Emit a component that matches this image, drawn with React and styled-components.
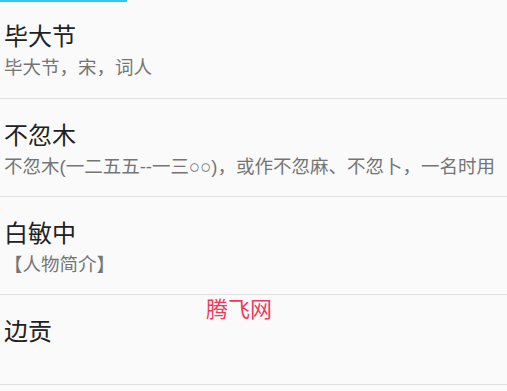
import React from "react";
import styled, { createGlobalStyle } from "styled-components";

const Global = createGlobalStyle`
  html, body { margin: 0; padding: 0; background: #fafafa; }
  body { font-family: Roboto, "Noto Sans CJK SC", sans-serif; }
`;

const Page = styled.div`
  position: relative;
  width: 507px;
  height: 391px;
  background: #fafafa;
  overflow: hidden;
`;

const TopBar = styled.div`
  position: absolute;
  left: 0;
  top: 0;
  width: 127px;
  height: 2px;
  background: #35c6ef;
`;

const List = styled.div`
  display: flex;
  flex-direction: column;
`;

const Row = styled.div`
  display: flex;
  flex-direction: column;
  box-sizing: border-box;
  height: ${(p) => p.$h}px;
  padding: 21px 4px 0;
  border-bottom: 1px solid #e0e0e0;
`;

const Title = styled.div`
  font-size: 24px;
  line-height: 32px;
  color: #212121;
  white-space: nowrap;
`;

const Sub = styled.div`
  margin-top: 3px;
  font-family: "Liberation Sans", "Noto Sans CJK SC", sans-serif;
  font-size: 18.5px;
  line-height: 24px;
  color: #757575;
  white-space: nowrap;
`;

const Watermark = styled.div`
  position: absolute;
  left: 206px;
  top: 295px;
  font-size: 22px;
  line-height: 30px;
  color: #ef3a5d;
`;

const items = [
  { t: "毕大节", s: "毕大节，宋，词人", h: 99 },
  { t: "不忽木", s: "不忽木(一二五五--一三○○)，或作不忽麻、不忽卜，一名时用", h: 98 },
  { t: "白敏中", s: "【人物简介】", h: 98 },
  { t: "边贡", s: "", h: 90 },
];

export default function App() {
  return (
    <Page>
      <Global />
      <List>
        {items.map((it) => (
          <Row key={it.t} $h={it.h}>
            <Title>{it.t}</Title>
            {it.s && <Sub>{it.s}</Sub>}
          </Row>
        ))}
      </List>
      <TopBar />
      <Watermark>腾飞网</Watermark>
    </Page>
  );
}
